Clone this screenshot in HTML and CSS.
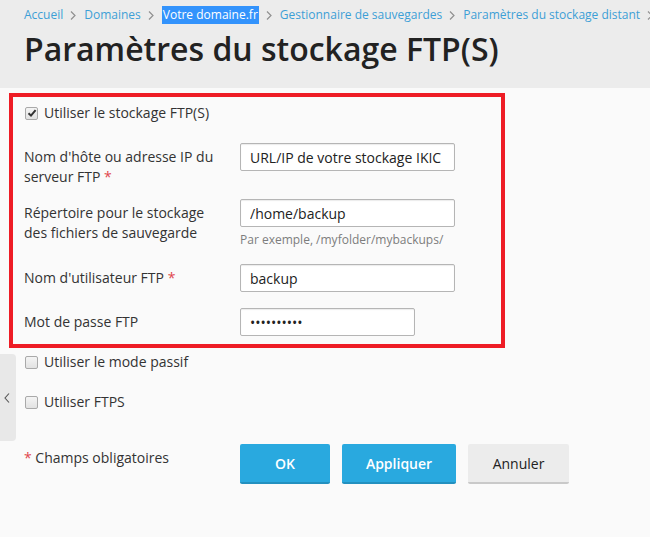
FILE: index.html
```html
<!DOCTYPE html>
<html>
<head>
	<meta charset="utf-8">
	<meta name="viewport" content="width=device-width, initial-scale=1">
	<title>Paramètres du stockage FTP(S)</title>
	<link rel="stylesheet" href="styles.css">
</head>
<body>

	<div class="page-head">
		<div class="crumbs">
			<a href="#">Accueil</a>
			<svg class="sep" width="6" height="9" viewBox="0 0 6 9"><path d="M1 0.5 L5 4.5 L1 8.5" fill="none" stroke="#909090" stroke-width="1.2"/></svg>
			<a href="#">Domaines</a>
			<svg class="sep" width="6" height="9" viewBox="0 0 6 9"><path d="M1 0.5 L5 4.5 L1 8.5" fill="none" stroke="#909090" stroke-width="1.2"/></svg>
			<a href="#" class="sel">Votre domaine.fr</a>
			<svg class="sep" width="6" height="9" viewBox="0 0 6 9"><path d="M1 0.5 L5 4.5 L1 8.5" fill="none" stroke="#909090" stroke-width="1.2"/></svg>
			<a href="#">Gestionnaire de sauvegardes</a>
			<svg class="sep" width="6" height="9" viewBox="0 0 6 9"><path d="M1 0.5 L5 4.5 L1 8.5" fill="none" stroke="#909090" stroke-width="1.2"/></svg>
			<a href="#">Paramètres du stockage distant</a>
			<svg class="sep" width="6" height="9" viewBox="0 0 6 9"><path d="M1 0.5 L5 4.5 L1 8.5" fill="none" stroke="#909090" stroke-width="1.2"/></svg>
		</div>
		<h1>Paramètres du stockage FTP(S)</h1>
	</div>

	<div class="content">
		<div class="side-toggle">
			<svg width="6" height="10" viewBox="0 0 6 10"><path d="M5 0.5 L1 5 L5 9.5" fill="none" stroke="#555" stroke-width="1.1"/></svg>
		</div>

		<div class="ftp-box">
			<label class="check-row">
				<span class="cbox checked"><svg width="10" height="10" viewBox="0 0 10 10"><path d="M1.5 5.2 L4 7.6 L8.6 2.2" fill="none" stroke="#333" stroke-width="2"/></svg></span>
				Utiliser le stockage FTP(S)
			</label>

			<div class="field two-line">
				<div class="lbl"><span>Nom d'hôte ou adresse IP du</span><br><span>serveur FTP</span> <span class="req">*</span></div>
				<div class="ctl"><input type="text" class="inp" value="URL/IP de votre stockage IKIC"></div>
			</div>

			<div class="field">
				<div class="lbl">Répertoire pour le stockage des fichiers de sauvegarde</div>
				<div class="ctl">
					<input type="text" class="inp" value="/home/backup">
					<div class="hint">Par exemple, /myfolder/mybackups/</div>
				</div>
			</div>

			<div class="field">
				<div class="lbl">Nom d'utilisateur FTP <span class="req">*</span></div>
				<div class="ctl"><input type="text" class="inp" value="backup"></div>
			</div>

			<div class="field">
				<div class="lbl">Mot de passe FTP</div>
				<div class="ctl"><input type="password" class="inp short" value="backup1234"></div>
			</div>
		</div>

		<div class="outer-checks">
			<label class="check-row">
				<span class="cbox"></span>
				Utiliser le mode passif
			</label>
			<label class="check-row second">
				<span class="cbox"></span>
				Utiliser FTPS
			</label>
		</div>

		<div class="form-foot">
			<div class="lbl"><span class="req">*</span> Champs obligatoires</div>
			<div class="btns">
				<button class="btn primary ok">OK</button>
				<button class="btn primary apply">Appliquer</button>
				<button class="btn cancel">Annuler</button>
			</div>
		</div>
	</div>

</body>
</html>
```

FILE: styles.css
```css
body{
	margin: 0;
	background: #fafafa;
	font-family: "Open Sans", "Liberation Sans", sans-serif;
	font-size: 14px;
	color: #333;
}
.page-head{
	background: #ececec;
	height: 88px;
	box-sizing: border-box;
	padding: 6px 0 0 24px;
}
.crumbs{
	display: flex;
	align-items: center;
	height: 18px;
	font-size: 12px;
	line-height: 18px;
	white-space: nowrap;
}
.crumbs a{
	color: #3d9fd6;
	text-decoration: none;
	flex: none;
}
.crumbs .sel{
	background: #3393fc;
	color: #fff;
	padding: 0 1px;
}
.crumbs .sep{
	flex: none;
	display: block;
	margin: 0 8px 0 7px;
}
h1{
	margin: 5px 0 0 0;
	font-size: 32px;
	line-height: 40px;
	font-weight: 600;
	color: #222;
}

.content{
	position: relative;
	padding-bottom: 40px;
}
.side-toggle{
	position: absolute;
	left: 0;
	top: 261px;
	width: 16px;
	height: 87px;
	background: #e8e8e8;
	border-radius: 0 4px 4px 0;
	display: flex;
	align-items: center;
	justify-content: center;
}
.side-toggle svg{
	margin-right: 2px;
}

.ftp-box{
	margin: 5px 0 0 9px;
	width: 496px;
	box-sizing: border-box;
	border: 4px solid #ee1c25;
	padding: 6px 0 8px 11px;
}
.check-row{
	display: flex;
	align-items: center;
	line-height: 20px;
	height: 20px;
}
.cbox{
	width: 11px;
	height: 11px;
	margin: 0 6px 0 1px;
	border: 1px solid #a9a9a9;
	border-radius: 2px;
	background: linear-gradient(#f4f4f4, #e2e2e2);
	display: flex;
	align-items: center;
	justify-content: center;
}
.field{
	display: flex;
	margin-top: 16px;
}
.ftp-box .check-row + .field{
	margin-top: 20px;
}
.field.two-line + .field{
	margin-top: 12px;
}
.lbl{
	width: 206px;
	padding-right: 10px;
	padding-top: 4px;
	line-height: 20px;
}
.req{
	color: #e0464d;
}
.inp{
	display: block;
	width: 215px;
	height: 28px;
	box-sizing: border-box;
	border: 1px solid #b5b5b5;
	border-radius: 2px;
	box-shadow: inset 0 1px 1px rgba(0,0,0,0.08);
	background: #fff;
	padding: 0 9px;
	font-family: inherit;
	font-size: 14px;
	color: #222;
}
.inp.short{
	width: 175px;
}
.hint{
	margin-top: 5px;
	font-size: 12px;
	line-height: 16px;
	color: #7d7d7d;
}

.outer-checks{
	padding-left: 24px;
	margin-top: 4px;
}
.outer-checks .second{
	margin-top: 20px;
}
.form-foot{
	display: flex;
	margin-top: 32px;
	padding-left: 24px;
}
.btns{
	display: flex;
	gap: 12px;
}
.btn{
	height: 40px;
	border: none;
	border-bottom: 2px solid #2390bf;
	border-radius: 2px;
	font-family: inherit;
	font-size: 14px;
	padding: 0;
}
.primary{
	background: #29a9df;
	color: #fff;
	font-weight: 600;
}
.ok{
	width: 90px;
}
.apply{
	width: 114px;
}
.cancel{
	width: 101px;
	background: #ececec;
	border-bottom-color: #c9c9c9;
	color: #222;
}
```
